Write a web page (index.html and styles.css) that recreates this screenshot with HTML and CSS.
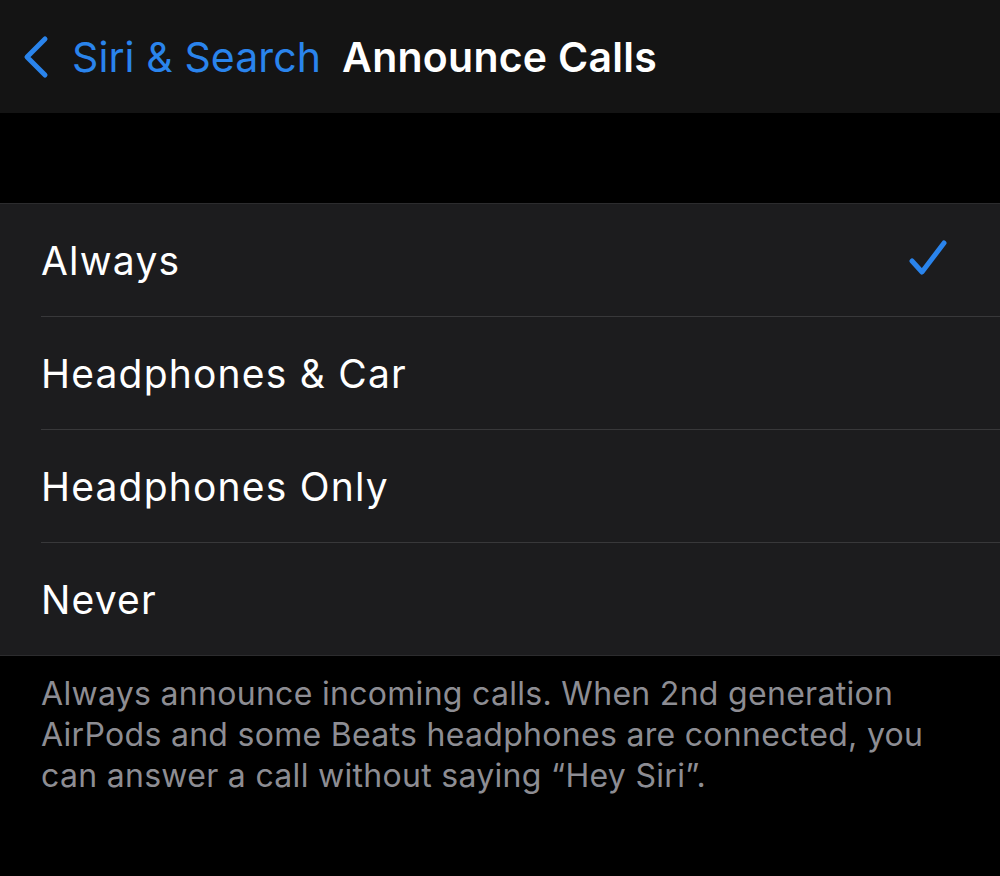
FILE: index.html
```html
<!DOCTYPE html>
<html>
<head>
  <meta charset="utf-8">
  <title>Announce Calls</title>
  <link rel="stylesheet" href="styles.css">
</head>
<body>
  <div class="navbar">
    <a class="back" href="#">
      <svg class="chevron" width="30" height="44" viewBox="0 0 30 44">
        <path d="M25 4 L7 22 L25 40" fill="none" stroke="#2a84ec" stroke-width="5" stroke-linecap="round" stroke-linejoin="round"/>
      </svg>
      <span>Siri &amp; Search</span>
    </a>
    <h1>Announce Calls</h1>
  </div>

  <div class="spacer"></div>

  <ul class="options">
    <li class="selected"><span>Always</span>
      <svg class="check" width="40" height="38" viewBox="0 0 40 38">
        <path d="M4 22 L14 33 L36 4" fill="none" stroke="#2a84ec" stroke-width="5" stroke-linecap="round" stroke-linejoin="round"/>
      </svg>
    </li>
    <li><span>Headphones &amp; Car</span></li>
    <li><span>Headphones Only</span></li>
    <li><span>Never</span></li>
  </ul>

  <p class="footer">Always announce incoming calls. When 2nd generation AirPods and some Beats headphones are connected, you can answer a call without saying “Hey Siri”.</p>
</body>
</html>
```

FILE: styles.css
```css
body {
  margin: 0;
  background: #000;
  font-family: Inter, "Noto Sans", sans-serif;
  color: #fff;
}

.navbar {
  height: 113px;
  background: #141414;
  display: flex;
  align-items: center;
  padding-left: 20px;
  box-sizing: border-box;
}

.back {
  display: flex;
  align-items: center;
  color: #2a84ec;
  text-decoration: none;
  font-size: 41px;
  letter-spacing: 0.1px;
}

.chevron {
  margin-right: 22px;
}

.navbar h1 {
  margin: 0 0 0 21px;
  font-size: 41px;
  font-weight: 600;
  letter-spacing: 0.25px;
}

.spacer {
  height: 90px;
}

.options {
  list-style: none;
  margin: 0;
  padding: 0 0 0 41px;
  background: #1c1c1e;
  border-top: 1px solid #2c2c2e;
  border-bottom: 1px solid #2c2c2e;
}

.options li {
  height: 112px;
  display: flex;
  align-items: center;
  justify-content: space-between;
  padding-right: 52px;
  font-size: 39px;
  letter-spacing: 1.2px;
  border-bottom: 1px solid #38383a;
}

.options li:last-child {
  border-bottom: none;
}

.check {
  margin-top: -4px;
}

.footer {
  margin: 0;
  padding: 17px 50px 0 41px;
  font-size: 32px;
  line-height: 41px;
  letter-spacing: 0.3px;
  color: #8d8d93;
}
```
